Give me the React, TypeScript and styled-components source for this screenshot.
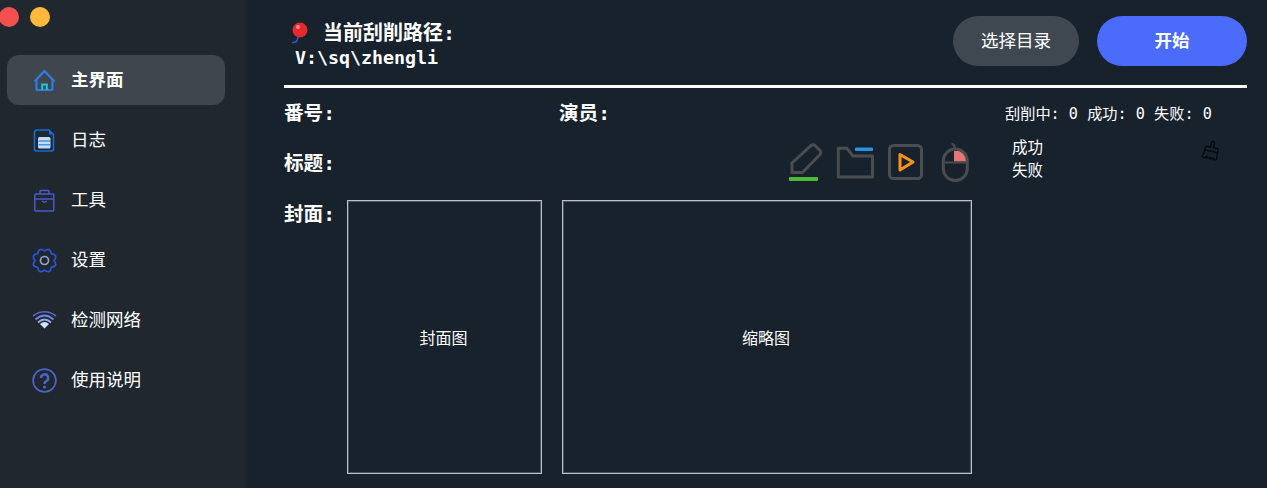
import React from "react";
import styled, { createGlobalStyle } from "styled-components";

const Global = createGlobalStyle`
  html, body { margin: 0; padding: 0; background: #18222d; }
  body { font-family: "DejaVu Sans Mono", "Noto Sans CJK SC", monospace; color: #fff; }
`;

const Shell = styled.div`
  width: 1267px;
  height: 488px;
  display: flex;
  overflow: hidden;
  background: #18222d;
`;

const Sidebar = styled.aside`
  width: 245px;
  flex: none;
  background: #20272e;
  border-right: 2px solid #1c252e;
`;

const Lights = styled.div`
  display: flex;
  gap: 11px;
  margin-left: -1px;
  padding-top: 7px;
  height: 48px;
  box-sizing: border-box;
`;

const Light = styled.span<{ $color: string }>`
  width: 20px;
  height: 20px;
  border-radius: 50%;
  background: ${(p) => p.$color};
`;

const Menu = styled.nav`
  display: flex;
  flex-direction: column;
  gap: 10px;
  padding: 7px 20px 0 7px;
`;

const MenuItem = styled.div<{ $active?: boolean }>`
  height: 50px;
  display: flex;
  align-items: center;
  gap: 14px;
  padding-left: 25px;
  border-radius: 12px;
  background: ${(p) => (p.$active ? "#40464e" : "transparent")};
  font-size: 17.5px;
  font-weight: ${(p) => (p.$active ? 700 : 400)};
`;

const MenuLabel = styled.span`
  line-height: 24px;
  padding-bottom: 1px;
`;

const IconSlot = styled.span`
  width: 25px;
  height: 25px;
  display: block;
  flex: none;
  svg { display: block; }
`;

const Main = styled.main`
  flex: 1;
  padding: 16px 20px 0 37px;
  min-width: 0;
`;

const Header = styled.header`
  display: flex;
  justify-content: space-between;
  height: 69px;
  border-bottom: 3px solid #fff;
`;

const PathBlock = styled.div`
  padding: 4px 0 0 5px;
`;

const PathTitle = styled.div`
  display: flex;
  align-items: center;
  gap: 14px;
  font-size: 20px;
  font-weight: 700;
  line-height: 26px;
`;

const PathValue = styled.div`
  font-weight: 700;
  font-size: 18.3px;
  line-height: 24px;
  padding-left: 6px;
`;

const Actions = styled.div`
  display: flex;
  gap: 18px;
`;

const Pill = styled.button<{ $primary?: boolean }>`
  width: ${(p) => (p.$primary ? 150 : 126)}px;
  height: 50px;
  border: 0;
  border-radius: 25px;
  padding: 0 0 3px;
  color: #fff;
  font-family: inherit;
  font-size: 17.5px;
  font-weight: ${(p) => (p.$primary ? 700 : 400)};
  background: ${(p) => (p.$primary ? "#4b6bfb" : "#3f4750")};
`;

const Content = styled.div`
  display: flex;
`;

const Left = styled.div`
  width: 688px;
  flex: none;
`;

const InfoRow = styled.div`
  height: 50px;
  display: flex;
  align-items: center;
`;

const FieldLabel = styled.div<{ $width?: number }>`
  width: ${(p) => p.$width ?? 63}px;
  font-size: 19.6px;
  font-weight: 700;
  line-height: 26px;
  padding-top: 1px;
  flex: none;
`;

const CoverLabel = styled(FieldLabel)`
  padding-top: 2px;
`;

const Tools = styled.div`
  margin-left: auto;
  display: flex;
  align-items: center;
  gap: 13px;
  padding: 0 2px 2px 0;
  svg { display: block; }
`;

const CoverRow = styled.div`
  display: flex;
  align-items: flex-start;
  margin-top: 12px;
`;

const Frames = styled.div`
  display: flex;
  gap: 20px;
`;

const Frame = styled.div<{ $width: number }>`
  width: ${(p) => p.$width}px;
  height: 274px;
  box-sizing: border-box;
  border: 1px solid #b9c0c8;
  box-shadow: inset 0 0 0 1px #4a525b;
  display: flex;
  align-items: center;
  justify-content: center;
  padding-right: 2px;
  font-size: 16px;
`;

const Right = styled.div`
  flex: 1;
  padding-left: 33px;
`;

const Stats = styled.div`
  height: 50px;
  box-sizing: border-box;
  padding-bottom: 2px;
  display: flex;
  align-items: center;
  font-size: 15.2px;
  white-space: pre;
`;

const ResultRow = styled.div`
  display: flex;
  justify-content: space-between;
  padding: 0 29px 0 7px;
`;

const ResultList = styled.div`
  font-size: 15.5px;
  line-height: 23px;
  margin-top: -1px;
`;

const Broom = styled.span`
  display: block;
  margin-top: 2px;
  transform: rotate(12deg);
  svg { display: block; }
`;

// scalloped outline for the settings icon
const gearPath = () => {
  const lobes = 8;
  const at = (deg: number, r: number) => {
    const a = (deg * Math.PI) / 180;
    return `${(12.5 + r * Math.cos(a)).toFixed(2)} ${(12.5 + r * Math.sin(a)).toFixed(2)}`;
  };
  let d = `M${at(0, 9.6)}`;
  for (let i = 0; i < lobes; i++) {
    const step = 360 / lobes;
    d += ` Q${at(i * step + step / 2, 15)} ${at((i + 1) * step, 9.6)}`;
  }
  return d + " Z";
};

const nav = [
  { label: "主界面", active: true, icon: (
    <svg width="25" height="25" viewBox="0 0 25 25" fill="none">
      <path d="M2.5 13.5 L12.5 3 L22.5 13.5" stroke="#2f7bea" strokeWidth="2.2" strokeLinejoin="round" />
      <path d="M4.5 11 V21 Q4.5 22 5.5 22 H19.5 Q20.5 22 20.5 21 V11" stroke="#2f7bea" strokeWidth="2.2" />
      <path d="M10.2 22 V16.5 H14.8 V22" stroke="#1fc8d8" strokeWidth="2" />
    </svg>
  ) },
  { label: "日志", icon: (
    <svg width="25" height="25" viewBox="0 0 25 25" fill="none">
      <path d="M4.5 2 H17 L21.5 6.5 V21 A2 2 0 0 1 19.5 23 H4.5 A2 2 0 0 1 2.5 21 V4 A2 2 0 0 1 4.5 2 Z" stroke="#0f6fe0" strokeWidth="1.6" />
      <path d="M17 2 V6.5 H21.5 Z" fill="#0f6fe0" />
      <rect x="6" y="9" width="12.5" height="11.5" rx="1.5" fill="#c3dcf7" />
      <path d="M6.5 13 H18 M6.5 16.8 H18" stroke="#4c91e6" strokeWidth="1.4" />
    </svg>
  ) },
  { label: "工具", icon: (
    <svg width="25" height="25" viewBox="0 0 25 25" fill="none">
      <rect x="2.8" y="6" width="19" height="17" rx="1" stroke="#4a5bc9" strokeWidth="1.5" />
      <path d="M8 6 V3 Q8 2.4 9 2.4 H16 Q17 2.4 17 3 V6 M2.8 11 H21.8" stroke="#4a5bc9" strokeWidth="1.5" />
      <path d="M10 13 Q12.3 15.5 14.6 13" stroke="#4a5bc9" strokeWidth="1.5" />
    </svg>
  ) },
  { label: "设置", icon: (
    <svg width="25" height="25" viewBox="0 0 25 25" fill="none">
      <path d={gearPath()} stroke="#2b55d8" strokeWidth="1.7" strokeLinejoin="round" />
      <circle cx="12.5" cy="12.5" r="4" stroke="#8ea3d8" strokeWidth="1.7" />
    </svg>
  ) },
  { label: "检测网络", icon: (
    <svg width="25" height="25" viewBox="0 0 25 25" fill="none">
      <path d="M1 8 Q12.5 -0.5 24 8" stroke="#5468c8" strokeWidth="1.6" />
      <path d="M3.5 11.5 Q12.5 3.5 21.5 11.5" stroke="#6f84dc" strokeWidth="1.8" />
      <path d="M6 14.5 Q12.5 8.5 19 14.5" stroke="#93a8ee" strokeWidth="1.8" />
      <path d="M8 16 Q12.5 12 17 16 L12.5 20.5 Z" fill="#d5e2ff" />
    </svg>
  ) },
  { label: "使用说明", icon: (
    <svg width="25" height="25" viewBox="0 0 25 25" fill="none">
      <circle cx="12.5" cy="12.5" r="11.4" stroke="#4d62c6" strokeWidth="1.7" />
      <path d="M9 10 A3.6 3.6 0 1 1 14.2 13.2 Q12.5 14 12.5 16" stroke="#4d62c6" strokeWidth="2.5" />
      <circle cx="12.5" cy="19" r="1.5" fill="#4d62c6" />
    </svg>
  ) },
];

export default function App() {
  return (
    <Shell>
      <Global />
      <Sidebar>
        <Lights>
          <Light $color="#f55050" />
          <Light $color="#ffb93a" />
        </Lights>
        <Menu>
          {nav.map((item) => (
            <MenuItem key={item.label} $active={item.active}>
              <IconSlot>{item.icon}</IconSlot>
              <MenuLabel>{item.label}</MenuLabel>
            </MenuItem>
          ))}
        </Menu>
      </Sidebar>
      <Main>
        <Header>
          <PathBlock>
            <PathTitle>
              <svg width="20" height="22" viewBox="0 0 20 22" fill="none">
                <path d="M9 14 Q9 21 3 20.5" stroke="#3457d5" strokeWidth="1.5" />
                <circle cx="11" cy="8" r="7.5" fill="#e32a2f" />
                <circle cx="9" cy="5" r="2" fill="#f58a8a" />
              </svg>
              当前刮削路径:
            </PathTitle>
            <PathValue>V:\sq\zhengli</PathValue>
          </PathBlock>
          <Actions>
            <Pill>选择目录</Pill>
            <Pill $primary>开始</Pill>
          </Actions>
        </Header>
        <Content>
          <Left>
            <InfoRow>
              <FieldLabel $width={275}>番号:</FieldLabel>
              <FieldLabel>演员:</FieldLabel>
            </InfoRow>
            <InfoRow>
              <FieldLabel>标题:</FieldLabel>
              <Tools>
                <svg width="34" height="38" viewBox="0 0 34 38" fill="none">
                  <path d="M3 29.5 V20 L22 2.5 Q24 1 26 2.5 L31 7.5 Q32.5 9.5 31 11.5 L13.5 29.5 Z" stroke="#4a4d50" strokeWidth="3" strokeLinejoin="round" />
                  <rect x="0" y="34" width="29" height="4" rx="1" fill="#4dbb3a" />
                </svg>
                <svg width="39" height="33" viewBox="0 0 39 33" fill="none">
                  <path d="M2.3 2.3 H11 L17 10 H36.5 V31 H2.3 Z" stroke="#4a4d50" strokeWidth="3" strokeLinejoin="round" />
                  <rect x="19" y="1.5" width="18" height="3.4" rx="1" fill="#2196ea" />
                </svg>
                <svg width="40" height="36" viewBox="0 0 40 36" fill="none">
                  <rect x="1.5" y="1.5" width="32" height="33" rx="4" stroke="#4a4d50" strokeWidth="3" />
                  <path d="M12 10.5 V26 L25 18 Z" stroke="#f7931a" strokeWidth="3" strokeLinejoin="round" />
                </svg>
                <svg width="29" height="39" viewBox="0 0 29 39" fill="none">
                  <path d="M13 8 H21 Q25 9 25 13 V18.5 H13 Z" fill="#e87474" />
                  <rect x="2.3" y="6" width="24" height="31.5" rx="12" stroke="#4a4d50" strokeWidth="3" />
                  <path d="M2.3 19.5 H26.5 M13.5 6 V3.5 Q13.5 1.5 10.5 1" stroke="#4a4d50" strokeWidth="2.2" />
                </svg>
              </Tools>
            </InfoRow>
            <CoverRow>
              <CoverLabel>封面:</CoverLabel>
              <Frames>
                <Frame $width={195}>封面图</Frame>
                <Frame $width={410}>缩略图</Frame>
              </Frames>
            </CoverRow>
          </Left>
          <Right>
            <Stats>刮削中: 0 成功: 0 失败: 0</Stats>
            <ResultRow>
              <ResultList>
                <div>成功</div>
                <div>失败</div>
              </ResultList>
              <Broom>
                <svg width="18" height="20" viewBox="0 0 18 20" fill="none">
                  <path d="M7.5 7 V2.5 Q7.5 1 9 1 Q10.5 1 10.5 2.5 V7 H14 Q15.5 7 15.5 9 V11 H2.5 V9 Q2.5 7 4 7 Z M2.5 11 Q2.5 15 1 18 L4 19 L6 16.5 L6.5 19 L9 17 L10 19 L12 17 L13 19 L16 18 Q15.5 15 15.5 11" stroke="#05080c" strokeWidth="1.3" strokeLinejoin="round" />
                </svg>
              </Broom>
            </ResultRow>
          </Right>
        </Content>
      </Main>
    </Shell>
  );
}
